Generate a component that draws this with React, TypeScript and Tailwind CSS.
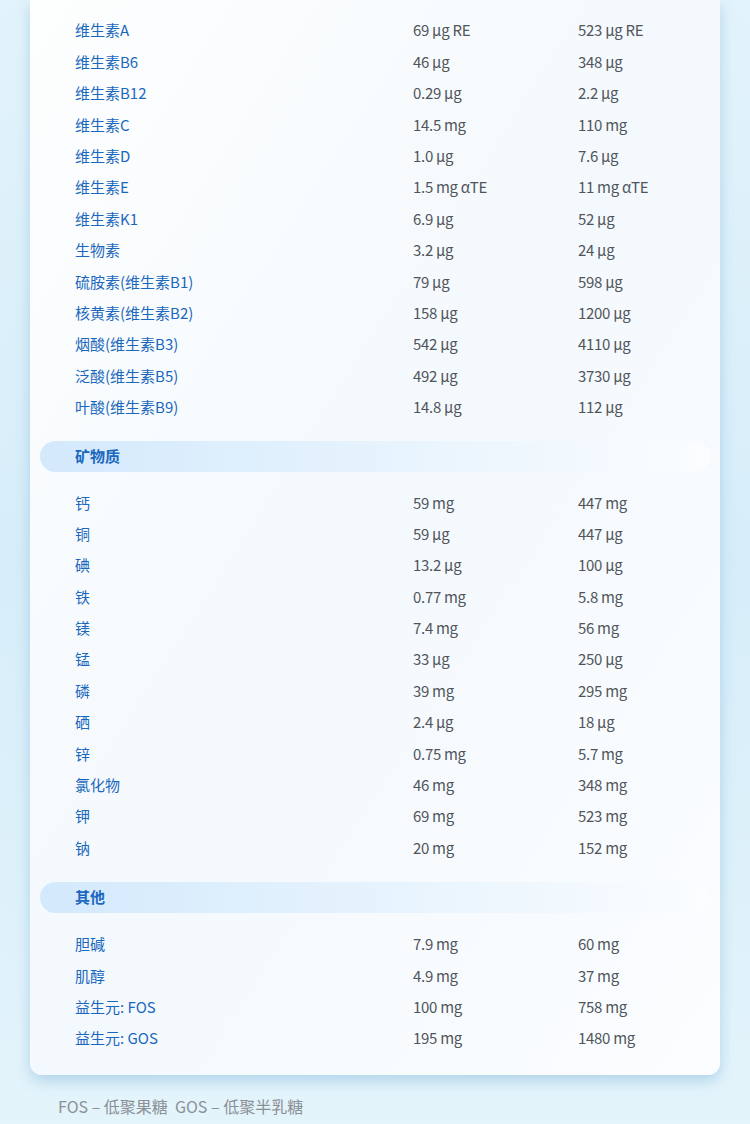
import React from 'react';

type Row = [string, string, string];

const vitamins: Row[] = [
  ['维生素A', '69 µg RE', '523 µg RE'],
  ['维生素B6', '46 µg', '348 µg'],
  ['维生素B12', '0.29 µg', '2.2 µg'],
  ['维生素C', '14.5 mg', '110 mg'],
  ['维生素D', '1.0 µg', '7.6 µg'],
  ['维生素E', '1.5 mg αTE', '11 mg αTE'],
  ['维生素K1', '6.9 µg', '52 µg'],
  ['生物素', '3.2 µg', '24 µg'],
  ['硫胺素(维生素B1)', '79 µg', '598 µg'],
  ['核黄素(维生素B2)', '158 µg', '1200 µg'],
  ['烟酸(维生素B3)', '542 µg', '4110 µg'],
  ['泛酸(维生素B5)', '492 µg', '3730 µg'],
  ['叶酸(维生素B9)', '14.8 µg', '112 µg'],
];

const minerals: Row[] = [
  ['钙', '59 mg', '447 mg'],
  ['铜', '59 µg', '447 µg'],
  ['碘', '13.2 µg', '100 µg'],
  ['铁', '0.77 mg', '5.8 mg'],
  ['镁', '7.4 mg', '56 mg'],
  ['锰', '33 µg', '250 µg'],
  ['磷', '39 mg', '295 mg'],
  ['硒', '2.4 µg', '18 µg'],
  ['锌', '0.75 mg', '5.7 mg'],
  ['氯化物', '46 mg', '348 mg'],
  ['钾', '69 mg', '523 mg'],
  ['钠', '20 mg', '152 mg'],
];

const others: Row[] = [
  ['胆碱', '7.9 mg', '60 mg'],
  ['肌醇', '4.9 mg', '37 mg'],
  ['益生元: FOS', '100 mg', '758 mg'],
  ['益生元: GOS', '195 mg', '1480 mg'],
];

function Rows({ rows }: { rows: Row[] }) {
  return (
    <div className="flex flex-col">
      {rows.map(([name, a, b]) => (
        <div key={name} className="flex h-[31.4px] items-center text-[15px]">
          <div className="w-[383px] shrink-0 pl-[45px] text-[#1a68bd]">{name}</div>
          <div className="w-[165px] shrink-0 text-[#50555b] tracking-[-0.3px]">{a}</div>
          <div className="text-[#50555b] tracking-[-0.3px]">{b}</div>
        </div>
      ))}
    </div>
  );
}

function Header({ title }: { title: string }) {
  return (
    <div className="mx-[10px] flex h-[31px] items-center rounded-full bg-gradient-to-r from-[#d3e9fc] via-[#e6f3fd] to-[#fbfdff] pl-[35px] text-[15px] font-bold text-[#1a68bd]">
      {title}
    </div>
  );
}

export default function App() {
  return (
    <div
      className="min-h-[1124px] w-[750px] bg-gradient-to-b from-[#e3f3fb] via-[#d6edf9] to-[#e4f4fb]"
      style={{ fontFamily: '"Noto Sans CJK SC", "Noto Sans", sans-serif' }}
    >
      <div className="mx-[30px] rounded-b-[12px] bg-gradient-to-br from-[#fdfefe] via-[#f4f9fd] to-[#fbfdff] pt-[15px] pb-[21px] shadow-[0_6px_14px_rgba(120,175,215,0.45)]">
        <Rows rows={vitamins} />
        <div className="h-[18px]" />
        <Header title="矿物质" />
        <div className="h-[15px]" />
        <Rows rows={minerals} />
        <div className="h-[18px]" />
        <Header title="其他" />
        <div className="h-[16px]" />
        <Rows rows={others} />
      </div>
      <div className="mt-[19px] pl-[58px] text-[16px] text-[#8a9096]">
        FOS – 低聚果糖&nbsp;&nbsp;GOS – 低聚半乳糖
      </div>
    </div>
  );
}
